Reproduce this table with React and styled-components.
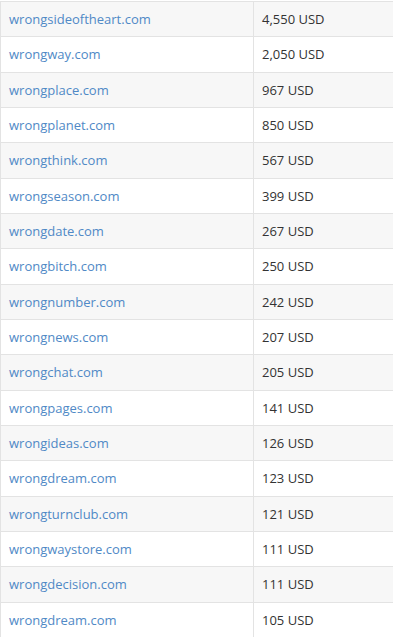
import styled, { createGlobalStyle } from "styled-components";

const rows = [
  ["wrongsideoftheart.com", "4,550 USD"],
  ["wrongway.com", "2,050 USD"],
  ["wrongplace.com", "967 USD"],
  ["wrongplanet.com", "850 USD"],
  ["wrongthink.com", "567 USD"],
  ["wrongseason.com", "399 USD"],
  ["wrongdate.com", "267 USD"],
  ["wrongbitch.com", "250 USD"],
  ["wrongnumber.com", "242 USD"],
  ["wrongnews.com", "207 USD"],
  ["wrongchat.com", "205 USD"],
  ["wrongpages.com", "141 USD"],
  ["wrongideas.com", "126 USD"],
  ["wrongdream.com", "123 USD"],
  ["wrongturnclub.com", "121 USD"],
  ["wrongwaystore.com", "111 USD"],
  ["wrongdecision.com", "111 USD"],
  ["wrongdream.com", "105 USD"],
];

const GlobalStyle = createGlobalStyle`
  html, body {
    margin: 0;
    padding: 0;
    background: #fff;
    overflow: hidden;
  }
  body {
    font-family: "Open Sans", "Liberation Sans", sans-serif;
    font-size: 13px;
    color: #333;
  }
`;

const Table = styled.table`
  border-collapse: collapse;
  width: 100%;
  table-layout: fixed;
  margin-top: 1px;
  border-left: 1px solid #e3e3e3;
`;

const Row = styled.tr`
  background: ${(p) => (p.$striped ? "#f7f7f7" : "#fff")};
`;

const Cell = styled.td`
  padding: 8px 8px;
  height: 18.33px;
  line-height: 18.33px;
  border-top: 1px solid #e3e3e3;
  border-right: ${(p) => (p.$last ? "none" : "1px solid #e3e3e3")};
  vertical-align: middle;
  white-space: nowrap;
  overflow: hidden;
  width: ${(p) => p.$w || "auto"};
  box-sizing: content-box;
`;

const DomainLink = styled.a`
  color: #5089c6;
  text-decoration: none;
`;

export default function App() {
  return (
    <>
      <GlobalStyle />
      <Table>
        <tbody>
          {rows.map(([domain, price], i) => (
            <Row key={i} $striped={i % 2 === 0}>
              <Cell $w="236px">
                <DomainLink href="#">{domain}</DomainLink>
              </Cell>
              <Cell $last>{price}</Cell>
            </Row>
          ))}
        </tbody>
      </Table>
    </>
  );
}
